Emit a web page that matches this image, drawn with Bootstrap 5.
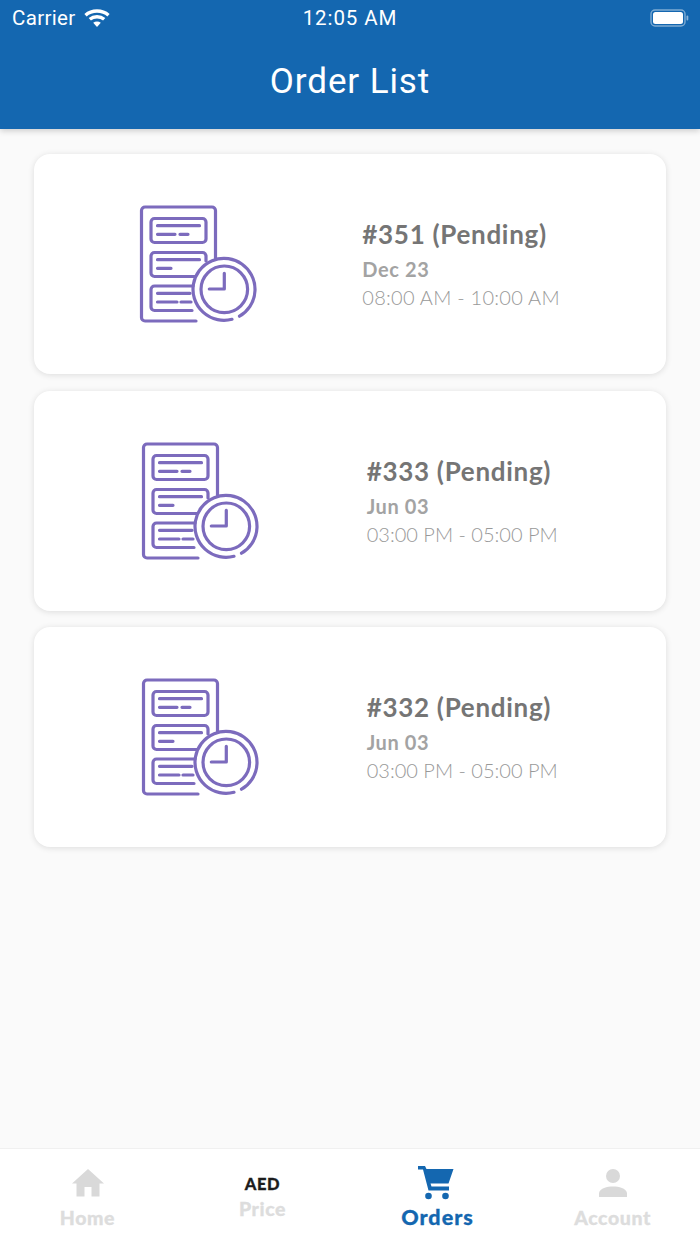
<!DOCTYPE html>
<html lang="en">
<head>
<meta charset="utf-8">
<title>Order List</title>
<link href="https://cdn.jsdelivr.net/npm/bootstrap@5.3.0/dist/css/bootstrap.min.css" rel="stylesheet">
<style>
html,body{height:100%;}
body{background:#fafafa;font-family:"Lato","Liberation Sans",sans-serif;overflow:hidden;}
.screen{height:1244px;width:700px;}
.topbar{background:#1467b0;height:129px;box-shadow:0 2px 6px rgba(0,0,0,.18);position:relative;z-index:2;color:#fff;font-family:Roboto,"Liberation Sans",sans-serif;}
.statusrow{height:36px;padding:0 10px 0 12px;font-size:20.5px;position:relative;letter-spacing:.35px;}
.status-time{position:absolute;left:0;right:0;text-align:center;top:6px;line-height:24px;letter-spacing:.9px;}
.carrier{line-height:24px;}
.page-title{font-size:35px;font-weight:400;letter-spacing:.9px;line-height:40px;margin:26px 0 0;text-align:center;}
.orders{padding:25px 34px 0;gap:16.5px;}
.ocard{height:220px;border:0;border-radius:16px;background:#fff;box-shadow:0 1px 6px rgba(0,0,0,.12);justify-content:space-evenly;}
.oicon{width:116px;height:116px;display:block;overflow:visible;}
.otitle{font-size:26px;font-weight:700;color:#757575;line-height:30px;letter-spacing:.7px;margin-top:1px;}
.odate{font-size:20px;font-weight:700;color:#a3a3a3;line-height:26px;margin-top:7px;letter-spacing:.6px;}
.otime{font-size:20px;font-weight:300;color:#999;line-height:26px;margin-top:2px;letter-spacing:.25px;}
.otime-narrow{letter-spacing:0;}
.tabbar{height:96px;background:#fff;border-top:1px solid #f0f0f0;}
.tabitem{width:175px;position:relative;font-weight:900;font-size:19.5px;color:#ddd;letter-spacing:.6px;line-height:24px;text-align:center;-webkit-text-stroke:.3px currentColor;}
.tabicon{display:block;margin:0 auto;}
.home-tab{padding-top:20px;}
.home-tab .tabicon{height:28px;width:32px;}
.home-tab span,.acct-tab span{display:block;margin-top:9px;}
.price-tab{padding-top:25px;}
.aed{display:block;font-size:16.5px;font-weight:900;color:#1c1c1c;line-height:20px;}
.price-tab span{display:block;margin-top:3px;}
.orders-tab{padding-top:17px;color:#1467b0;font-size:21.5px;letter-spacing:1px;}
.orders-tab span{display:block;margin-top:5px;}
.orders-tab .tabicon{margin-left:68px;}
.acct-tab{padding-top:20px;}
</style>
</head>
<body>
<div class="screen d-flex flex-column">
  <header class="topbar flex-shrink-0">
    <div class="statusrow d-flex align-items-center justify-content-between">
      <div class="d-flex align-items-center gap-2">
        <span class="carrier">Carrier</span>
        <svg width="26" height="20" viewBox="0 0 26 20" fill="none" stroke="#fff" stroke-width="3.4" aria-hidden="true"><path d="M1.500 7.200C7.800 1.600 18.200 1.600 24.500 7.200"/><path d="M5.800 11.300C9.800 7.800 16.200 7.800 20.200 11.300"/><path d="M13 19l-3.800-4.300c2.200-1.700 5.400-1.700 7.600 0z" fill="#fff" stroke="none"/></svg>
      </div>
      <div class="status-time">12:05 AM</div>
      <svg width="40" height="20" viewBox="0 0 40 20" aria-hidden="true"><rect x="1" y="2" width="34" height="16" rx="4" fill="none" stroke="#fff" stroke-opacity=".45" stroke-width="1.4"/><rect x="3" y="4" width="30" height="12" rx="2.500" fill="#fff"/><rect x="36.500" y="7.500" width="1.800" height="5" rx=".9" fill="#fff" fill-opacity=".5"/></svg>
    </div>
    <h1 class="page-title">Order List</h1>
  </header>

  <main class="orders flex-grow-1 d-flex flex-column">
    <div class="card ocard flex-row align-items-center">
      <svg class="oicon" viewBox="0 0 116 116" fill="none" stroke="#7c6bbd" stroke-width="3.2" stroke-linecap="round" stroke-linejoin="round" aria-hidden="true"><use href="#orderglyph"/></svg>
      <div><div class="otitle">#351 (Pending)</div><div class="odate">Dec 23</div><div class="otime">08:00 AM - 10:00 AM</div></div>
    </div>
    <div class="card ocard flex-row align-items-center">
      <svg class="oicon" viewBox="0 0 116 116" fill="none" stroke="#7c6bbd" stroke-width="3.2" stroke-linecap="round" stroke-linejoin="round" aria-hidden="true"><use href="#orderglyph"/></svg>
      <div><div class="otitle">#333 (Pending)</div><div class="odate">Jun 03</div><div class="otime otime-narrow">03:00 PM - 05:00 PM</div></div>
    </div>
    <div class="card ocard flex-row align-items-center">
      <svg class="oicon" viewBox="0 0 116 116" fill="none" stroke="#7c6bbd" stroke-width="3.2" stroke-linecap="round" stroke-linejoin="round" aria-hidden="true"><use href="#orderglyph"/></svg>
      <div><div class="otitle">#332 (Pending)</div><div class="odate">Jun 03</div><div class="otime otime-narrow">03:00 PM - 05:00 PM</div></div>
    </div>
  </main>

  <nav class="tabbar flex-shrink-0 d-flex">
    <div class="tabitem home-tab">
      <svg class="tabicon" viewBox="0 0 32 28" aria-hidden="true"><path fill="#d9d9d9" d="M16 0 32 14.500H27.500V27.500H19.500V18H12.500V27.500H4.500V14.500H0Z"/></svg>
      <span>Home</span>
    </div>
    <div class="tabitem price-tab">
      <b class="aed">AED</b>
      <span>Price</span>
    </div>
    <div class="tabitem orders-tab">
      <svg class="tabicon" width="36" height="34" viewBox="0 0 36 34" aria-hidden="true"><path fill="#1467b0" d="M0 0H7L8.500 3H35.500L30.500 17.500H12.500L13.500 20.500H31V24.500H10.500L5 3.500H0Z"/><circle cx="10.500" cy="30" r="3.300" fill="#1467b0"/><circle cx="27.500" cy="30" r="3.300" fill="#1467b0"/></svg>
      <span>Orders</span>
    </div>
    <div class="tabitem acct-tab">
      <svg class="tabicon" width="28" height="28" viewBox="0 0 28 28" aria-hidden="true"><circle cx="14" cy="7" r="7" fill="#d9d9d9"/><path fill="#d9d9d9" d="M0 28V24C1 19 8 17.500 14 17.500S27 19 28 24V28Z"/></svg>
      <span>Account</span>
    </div>
  </nav>
</div>

<svg width="0" height="0" class="position-absolute" aria-hidden="true">
  <defs>
    <g id="orderglyph">
      <path d="M56 115H5A3.500 3.500 0 0 1 1.500 111.500V4.500A3.500 3.500 0 0 1 5 1H72A3.500 3.500 0 0 1 75.500 4.500V52"/>
      <rect x="11" y="12.500" width="55" height="24" rx="3.500"/>
      <path d="M17.500 19.700H59.500M17.500 28.300H35M40 28.300H48"/>
      <path d="M55 70.500H14.500A3.500 3.500 0 0 1 11 67V50A3.500 3.500 0 0 1 14.500 46.500H62.500A3.500 3.500 0 0 1 66 50V55"/>
      <path d="M17.500 53.700H59.500M17.500 62.300H31"/>
      <path d="M52 104.500H14.500A3.500 3.500 0 0 1 11 101V83.500A3.500 3.500 0 0 1 14.500 80H53"/>
      <path d="M17.500 87.300H50M17.500 96H37M41 96H51"/>
      <path d="M99.500 110.200A31 31 0 1 0 92 113.300"/>
      <circle cx="84.300" cy="83.300" r="23.300"/>
      <path d="M84.300 67.300V83H69.300"/>
    </g>
  </defs>
</svg>
<script src="https://cdn.jsdelivr.net/npm/bootstrap@5.3.0/dist/js/bootstrap.bundle.min.js"></script>
</body>
</html>
